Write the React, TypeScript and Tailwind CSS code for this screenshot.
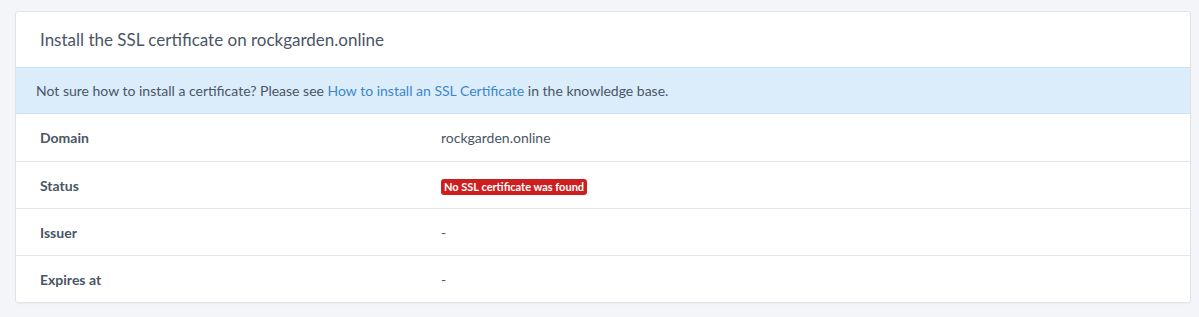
const rows: { label: string; value: React.ReactNode }[] = [
  { label: 'Domain', value: 'rockgarden.online' },
  {
    label: 'Status',
    value: (
      <span className="inline-block rounded-[3px] bg-[#cd1f1f] px-[3px] py-[1px] text-[11px] font-bold leading-[14px] text-white">
        No SSL certificate was found
      </span>
    ),
  },
  { label: 'Issuer', value: '-' },
  { label: 'Expires at', value: '-' },
]

export default function App() {
  return (
    <div className="min-h-[317px] bg-[#f4f5f9] pl-[15px] pr-[8px] pt-[11px] font-['Lato','Noto_Sans',sans-serif] text-[#4a5566]">
      <div className="overflow-hidden rounded-[3px] border border-[#dfe3ea] bg-white shadow-[0_1px_2px_rgba(0,0,0,0.04)]">
        <div className="flex h-[55px] items-center px-6 text-[17px] text-[#4a5566]">
          Install the SSL certificate on rockgarden.online
        </div>
        <div className="flex h-[47px] items-center border-y border-[#c9e3f7] bg-[#dbedfb] px-5 text-[14px]">
          <span>
            Not sure how to install a certificate? Please see{' '}
            <a href="#" className="text-[#3d87c9]">
              How to install an SSL Certificate
            </a>{' '}
            in the knowledge base.
          </span>
        </div>
        {rows.map((row, i) => (
          <div
            key={row.label}
            className={`grid h-[47px] grid-cols-[401px_1fr] items-center px-6 text-[14px] ${i > 0 ? 'border-t border-[#e2e5ea]' : ''}`}
          >
            <div className="font-bold">{row.label}</div>
            <div>{row.value}</div>
          </div>
        ))}
      </div>
    </div>
  )
}
